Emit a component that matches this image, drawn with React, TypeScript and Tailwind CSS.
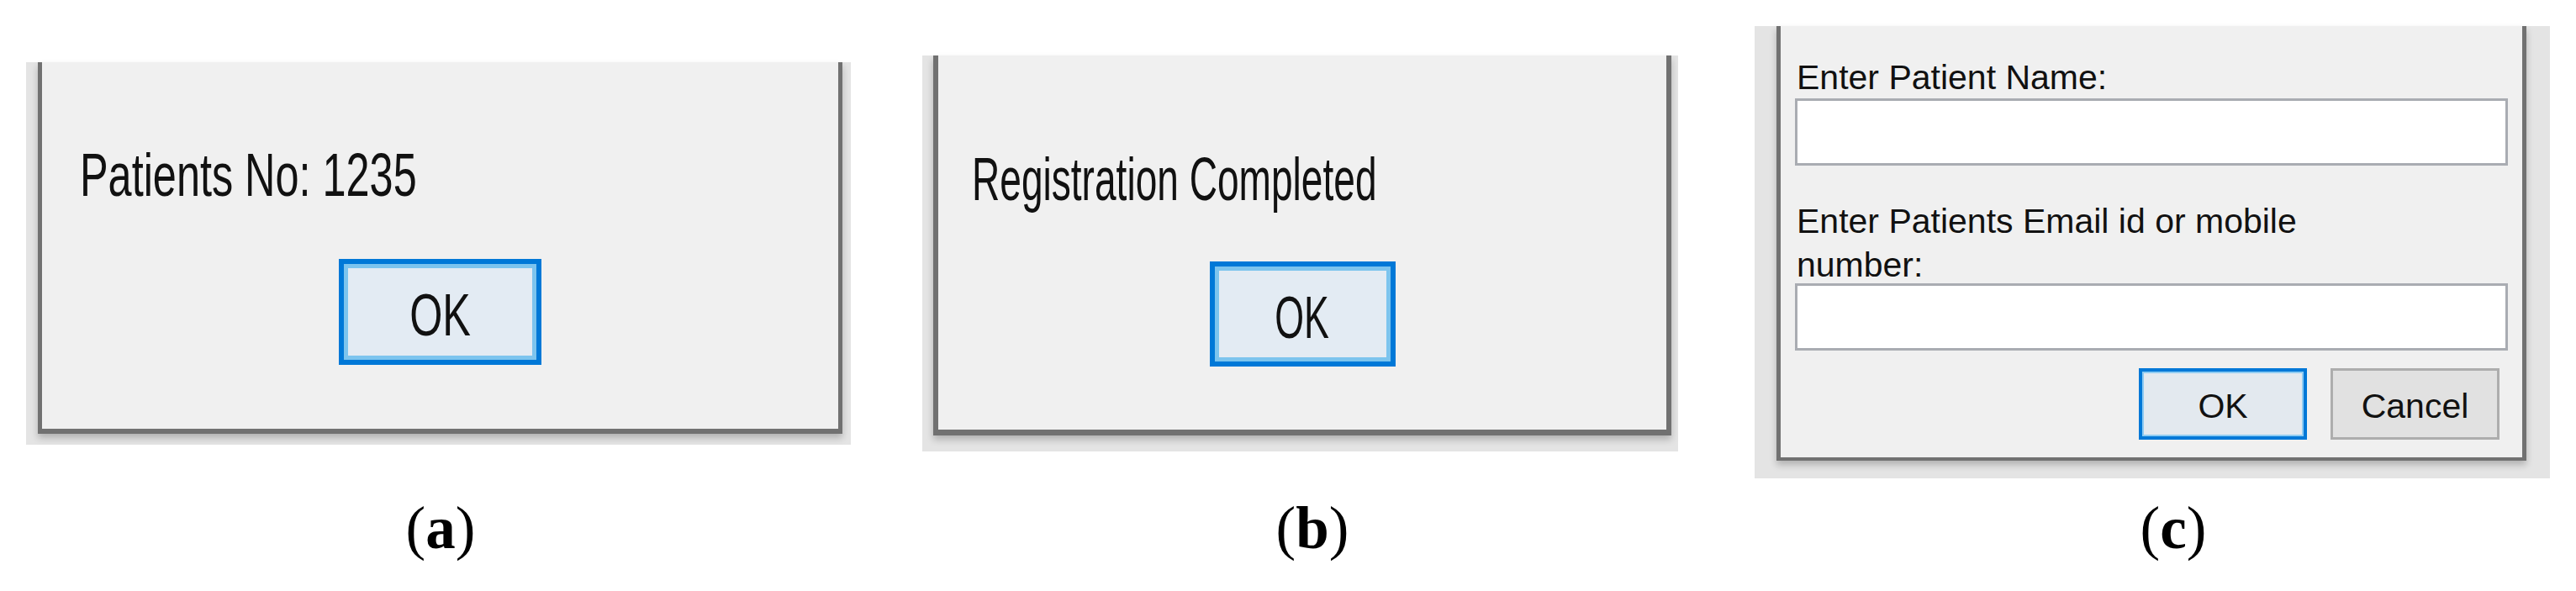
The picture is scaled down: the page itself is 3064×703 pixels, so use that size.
const sans = "font-['Liberation_Sans',Arial,sans-serif]";

const BlueButton = ({ w, h, outer, inner, children }: { w: string; h: string; outer: string; inner: string; children: React.ReactNode }) => (
  <div className={`${w} ${h} ${outer} border-[#0078d7] flex`}>
    <div className={`flex-1 ${inner} border-[#7cc4ee] bg-[#e3ebf3] flex items-center justify-center`}>{children}</div>
  </div>
);

const Caption = ({ letter, ml }: { letter: string; ml: string }) => (
  <div className={`${ml} w-[160px] text-center text-[71px] leading-none text-black font-['Liberation_Serif','Times_New_Roman',serif]`}>
    (<span className="font-bold">{letter}</span>)
  </div>
);

export default function App() {
  return (
    <div className={`w-[3064px] h-[703px] bg-white overflow-hidden ${sans}`}>
      <div className="flex items-start">
        {/* (a) patient number */}
        <div className="ml-[31px] mt-[74px] w-[981px] h-[455px] bg-[#e4e4e4] pl-[14px] pr-[10px] pb-[13px] flex">
          <div className="flex-1 flex flex-col border-x-[5px] border-b-[6px] border-[#717171] bg-[#f0f0f0] shadow-[0_5px_8px_rgba(0,0,0,0.22)]">
            <div className="pt-[98px] pl-[45px] h-[170px]">
              <span className="inline-block origin-left scale-x-[0.7] whitespace-nowrap text-[72px] leading-none text-[#111]">Patients No: 1235</span>
            </div>
            <div className="flex justify-center mt-[64px]">
              <BlueButton w="w-[241px]" h="h-[126px]" outer="border-[6px]" inner="border-[5px]">
                <span className="inline-block scale-x-[0.72] text-[70px] leading-none pt-[8px] text-[#111]">OK</span>
              </BlueButton>
            </div>
          </div>
        </div>

        {/* (b) registration done */}
        <div className="ml-[85px] mt-[66px] w-[899px] h-[471px] bg-[#e4e4e4] pl-[13px] pr-[8px] pb-[19px] flex">
          <div className="flex-1 flex flex-col border-x-[6px] border-b-[7px] border-[#717171] bg-[#f0f0f0] shadow-[0_5px_8px_rgba(0,0,0,0.22)]">
            <div className="pt-[111px] pl-[40px] h-[183px]">
              <span className="inline-block origin-left scale-x-[0.64] whitespace-nowrap text-[72px] leading-none text-[#111]">Registration Completed</span>
            </div>
            <div className="flex justify-center mt-[62px]">
              <BlueButton w="w-[221px]" h="h-[125px]" outer="border-[6px]" inner="border-[5px]">
                <span className="inline-block scale-x-[0.64] text-[70px] leading-none pt-[8px] text-[#111]">OK</span>
              </BlueButton>
            </div>
          </div>
        </div>

        {/* (c) patient form */}
        <div className="ml-[91px] mt-[31px] w-[946px] h-[538px] bg-[#e4e4e4] pl-[26px] pr-[28px] pb-[21px] flex">
          <div className="flex-1 flex flex-col border-x-[5px] border-b-[4px] border-[#717171] bg-[#f0f0f0] px-[17px] pt-[35px] shadow-[0_5px_8px_rgba(0,0,0,0.22)]">
            <div className="pl-[2px] text-[41px] leading-[52px] text-[#111]">Enter Patient Name:</div>
            <div className="-mt-[1px] h-[80px] border-[3px] border-[#a9acb2] bg-white" />
            <div className="mt-[40px] pl-[2px] text-[41px] leading-[52px] text-[#111]">
              Enter Patients Email id or mobile
              <br />
              number:
            </div>
            <div className="-mt-[4px] h-[80px] border-[3px] border-[#a9acb2] bg-white" />
            <div className="mt-[21px] mr-[10px] flex justify-end gap-[28px]">
              <div className="w-[200px] h-[85px] border-[4px] border-[#0078d7] flex">
                <div className="flex-1 border-[2px] border-[#8ecbf2] bg-[#e3e9ef] flex items-center justify-center">
                  <span className="text-[41px] leading-none pt-[6px] text-[#111]">OK</span>
                </div>
              </div>
              <div className="w-[201px] h-[85px] border-[3px] border-[#adadad] bg-[#e1e1e1] flex items-center justify-center">
                <span className="text-[41px] leading-none pt-[6px] text-[#111]">Cancel</span>
              </div>
            </div>
          </div>
        </div>
      </div>

      <div className="flex mt-[24px]">
        <Caption letter="a" ml="ml-[444px]" />
        <Caption letter="b" ml="ml-[877px]" />
        <Caption letter="c" ml="ml-[864px]" />
      </div>
    </div>
  );
}
